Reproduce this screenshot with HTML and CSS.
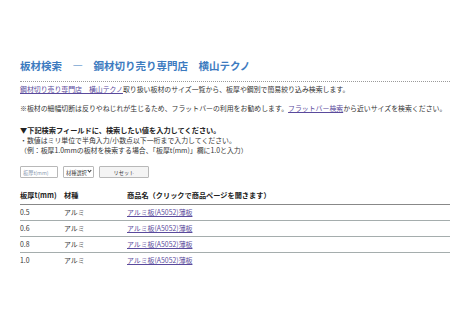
FILE: index.html
```html
<!DOCTYPE html>
<html lang="ja">
<head>
    <meta charset="UTF-8">
    <meta name="viewport" content="width=device-width, initial-scale=1.0">
    <title>板材検索</title>
    <link rel="stylesheet" href="styles.css">
</head>
<body>

<main class="page">
    <h1 class="page-title">板材検索　―　鋼材切り売り専門店　横山テクノ</h1>

    <p class="lead"><a href="#">鋼材切り売り専門店　横山テクノ</a>取り扱い板材のサイズ一覧から、板厚や鋼別で簡易絞り込み検索します。</p>

    <p class="note">※板材の細幅切断は反りやねじれが生じるため、フラットバーの利用をお勧めします。<a href="#">フラットバー検索</a>から近いサイズを検索ください。</p>

    <p class="guide-head">▼下記検索フィールドに、検索したい値を入力してください。</p>
    <p class="guide">・数値はミリ単位で半角入力/小数点以下一桁まで入力してください。</p>
    <p class="guide">（例：板厚1.0mmの板材を検索する場合、「板厚t(mm)」欄に1.0と入力）</p>

    <form class="filter" id="filterForm">
        <input type="text" id="thickness" class="filter-input" placeholder="板厚t(mm)">
        <div class="select-wrap">
            <select id="material" class="filter-select">
                <option value="">材種選択</option>
                <option value="アルミ">アルミ</option>
            </select>
        </div>
        <button type="reset" class="filter-reset">リセット</button>
    </form>

    <table class="results">
        <thead>
            <tr>
                <th class="col-t">板厚t(mm)</th>
                <th class="col-m">材種</th>
                <th>商品名（クリックで商品ページを開きます）</th>
            </tr>
        </thead>
        <tbody id="resultBody">
            <tr><td>0.5</td><td>アルミ</td><td><a href="#">アルミ板(A5052)薄板</a></td></tr>
            <tr><td>0.6</td><td>アルミ</td><td><a href="#">アルミ板(A5052)薄板</a></td></tr>
            <tr><td>0.8</td><td>アルミ</td><td><a href="#">アルミ板(A5052)薄板</a></td></tr>
            <tr><td>1.0</td><td>アルミ</td><td><a href="#">アルミ板(A5052)薄板</a></td></tr>
        </tbody>
    </table>
</main>

</body>
</html>
```

FILE: styles.css
```css
body {
    margin: 0;
    padding: 0;
    background: #fff;
    color: #333;
    font-family: "Noto Sans CJK JP", "Noto Sans", sans-serif;
    font-size: 6.9px;
    line-height: 10px;
}
a {
    color: #5a4a9c;
    text-decoration: underline;
}
.page {
    padding: 60px 0 0 20px;
}
.page-title {
    margin: 0;
    padding-bottom: 9px;
    font-size: 10.5px;
    line-height: 12px;
    font-weight: bold;
    color: #3d7bbf;
    border-bottom: 1px dotted #9a9a9a;
}
.lead {
    margin: 2px 0 0;
}
.note {
    margin: 9px 0 0;
}
.guide-head {
    margin: 12px 0 0;
    font-weight: bold;
    font-size: 7.2px;
    color: #222;
}
.guide {
    margin: 0;
}
.filter {
    display: flex;
    align-items: center;
    gap: 5px;
    margin-top: 11px;
    height: 12px;
}
.filter-input,
.filter-select,
.filter-reset {
    box-sizing: border-box;
    height: 12px;
    margin: 0;
    font-family: inherit;
    font-size: 5.2px;
    color: #333;
    border: 1px solid #b8b8b8;
    border-radius: 1px;
    background: #fff;
}
.filter-input {
    width: 38px;
    padding: 0 2px;
}
.filter-input::placeholder {
    color: #8a9ab0;
}
.select-wrap {
    position: relative;
}
.filter-select {
    display: block;
    width: 31px;
    padding: 0 6px 0 2px;
    -webkit-appearance: none;
    appearance: none;
}
.select-wrap::after {
    content: "";
    position: absolute;
    right: 3px;
    top: 3px;
    width: 2px;
    height: 2px;
    border-right: 1px solid #333;
    border-bottom: 1px solid #333;
    transform: rotate(45deg);
    pointer-events: none;
}
.filter-reset {
    width: 50px;
    padding: 0;
    background: #f4f4f4;
}
.results {
    width: 100%;
    margin-top: 2px;
    border-collapse: collapse;
}
.results th,
.results td {
    padding: 3px 0;
    text-align: left;
    line-height: 9px;
}
.results th {
    padding: 10px 0 4px;
    line-height: 10px;
    font-weight: bold;
    font-size: 7.2px;
    color: #222;
    border-bottom: 1px solid #888;
}
.results td {
    border-bottom: 1px solid #a5adad;
}
.results tbody tr:last-child td {
    border-bottom: none;
}
.col-t {
    width: 44px;
}
.col-m {
    width: 63px;
}
```
